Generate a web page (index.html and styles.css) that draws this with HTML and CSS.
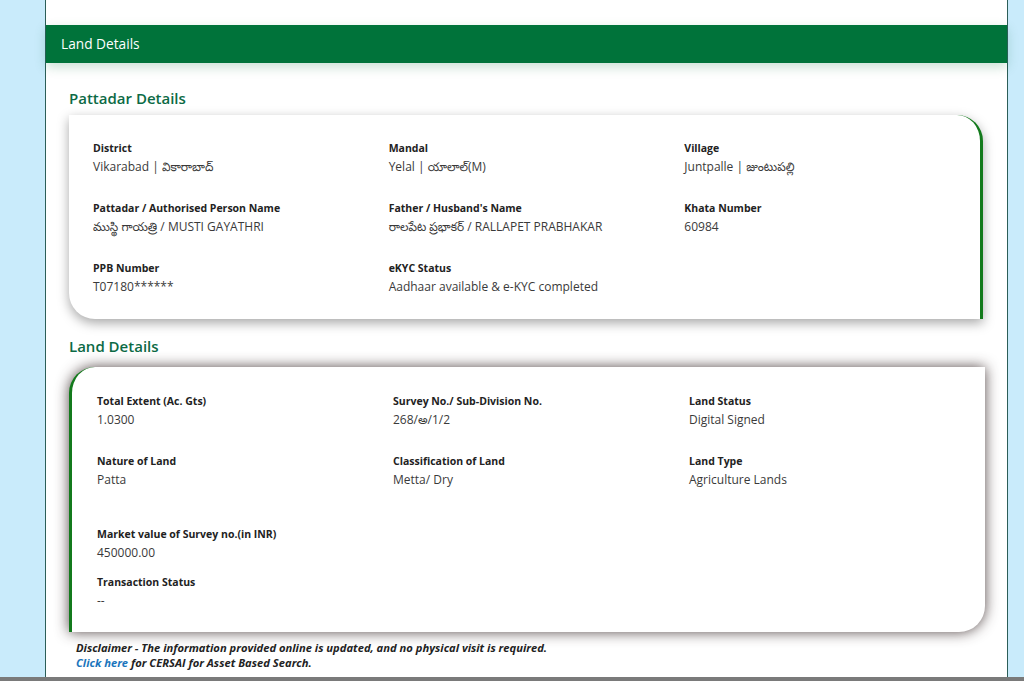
FILE: index.html
```html
<!DOCTYPE html>
<html lang="en">
<head>
  <meta charset="UTF-8" />
  <meta name="viewport" content="width=device-width, initial-scale=1.0"/>
  <title>Land Details</title>
  <link rel="stylesheet" href="styles.css">
</head>
<body>

<div class="page">
  <div class="gutter"></div>

  <div class="panel">
    <div class="panel-header">Land Details</div>

    <div class="panel-body">
      <h2 class="section-title">Pattadar Details</h2>
      <div class="card card-pattadar">
        <div class="fields">
          <div class="field">
            <div class="label">District</div>
            <div class="value">Vikarabad | వికారాబాద్</div>
          </div>
          <div class="field">
            <div class="label">Mandal</div>
            <div class="value">Yelal | యాలాల్(M)</div>
          </div>
          <div class="field">
            <div class="label">Village</div>
            <div class="value">Juntpalle | జుంటుపల్లి</div>
          </div>
          <div class="field">
            <div class="label">Pattadar / Authorised Person Name</div>
            <div class="value">ముస్థి గాయత్రి / MUSTI GAYATHRI</div>
          </div>
          <div class="field">
            <div class="label">Father / Husband's Name</div>
            <div class="value">రాలపేట ప్రభాకర్ / RALLAPET PRABHAKAR</div>
          </div>
          <div class="field">
            <div class="label">Khata Number</div>
            <div class="value">60984</div>
          </div>
          <div class="field">
            <div class="label">PPB Number</div>
            <div class="value">T07180******</div>
          </div>
          <div class="field">
            <div class="label">eKYC Status</div>
            <div class="value">Aadhaar available &amp; e-KYC completed</div>
          </div>
        </div>
      </div>

      <h2 class="section-title section-land">Land Details</h2>
      <div class="card card-land">
        <div class="fields">
          <div class="field">
            <div class="label">Total Extent (Ac. Gts)</div>
            <div class="value">1.0300</div>
          </div>
          <div class="field">
            <div class="label">Survey No./ Sub-Division No.</div>
            <div class="value">268/అ/1/2</div>
          </div>
          <div class="field">
            <div class="label">Land Status</div>
            <div class="value">Digital Signed</div>
          </div>
          <div class="field">
            <div class="label">Nature of Land</div>
            <div class="value">Patta</div>
          </div>
          <div class="field">
            <div class="label">Classification of Land</div>
            <div class="value">Metta/ Dry</div>
          </div>
          <div class="field">
            <div class="label">Land Type</div>
            <div class="value">Agriculture Lands</div>
          </div>
        </div>
        <div class="extra">
          <div class="field">
            <div class="label">Market value of Survey no.(in INR)</div>
            <div class="value">450000.00</div>
          </div>
          <div class="field">
            <div class="label">Transaction Status</div>
            <div class="value">--</div>
          </div>
        </div>
      </div>

      <div class="disclaimer">
        <p>Disclaimer - The information provided online is updated, and no physical visit is required.</p>
        <p><a href="#">Click here</a> for CERSAI for Asset Based Search.</p>
      </div>
    </div>
  </div>

  <div class="gutter"></div>
</div>

<div class="bottom-bar"></div>

</body>
</html>
```

FILE: styles.css
```css
* {
  box-sizing: border-box;
  font-family: 'Open Sans', 'Noto Sans', 'Noto Sans Telugu', sans-serif;
}

body {
  margin: 0;
  height: 681px;
  overflow: hidden;
  background: #c9ebfb;
  display: flex;
  flex-direction: column;
}

.page {
  height: 677px;
  display: flex;
  overflow: hidden;
}

.gutter {
  width: 45px;
  flex: none;
}

.gutter:last-child {
  width: 16px;
}

.panel {
  flex: 1;
  background: #fff;
  border-left: 1px solid #2c5e58;
  border-right: 1px solid #2c5e58;
  padding-top: 25px;
}

.panel-header {
  height: 38px;
  line-height: 38px;
  background: #00733a;
  color: #fff;
  font-size: 13.7px;
  padding-left: 15px;
  box-shadow: 0 4px 12px rgba(0, 115, 58, 0.22);
}

.panel-body {
  padding: 0 24px 0 23px;
}

.section-title {
  margin: 24px 0 6px;
  font-size: 15px;
  line-height: 22px;
  font-weight: 600;
  color: #0c6a45;
}

.section-land {
  margin: 16px 0 10px;
}

.card {
  background: #fff;
}

.card-pattadar {
  height: 204px;
  padding: 26px 0 0 24px;
  border-right: 3px solid #137a1c;
  border-radius: 0 26px 0 26px;
  box-shadow: 0 4px 12px rgba(0, 0, 0, 0.35);
}

.card-land {
  height: 265px;
  margin-right: -2px;
  padding: 27px 0 0 25px;
  border-left: 3px solid #137a1c;
  border-radius: 26px 0 26px 0;
  box-shadow: 0 0 14px rgba(55, 40, 40, 0.85);
}

.fields {
  display: grid;
  grid-template-columns: repeat(3, 1fr);
  row-gap: 25px;
}

.label {
  font-size: 10.5px;
  line-height: 15px;
  font-weight: 700;
  color: #222;
}

.value {
  margin-top: 2px;
  font-size: 12px;
  line-height: 18px;
  color: #3a3a3a;
}

.extra {
  margin-top: 38px;
  display: flex;
  flex-direction: column;
  gap: 13px;
}

.disclaimer {
  margin-top: 8px;
  padding-left: 7px;
}

.disclaimer p {
  margin: 0;
  font-size: 11.2px;
  line-height: 15px;
  font-weight: 700;
  font-style: italic;
  color: #222;
}

.disclaimer a {
  color: #1b75bc;
  text-decoration: none;
}

.bottom-bar {
  height: 4px;
  background: #7a7a7a;
}
```
